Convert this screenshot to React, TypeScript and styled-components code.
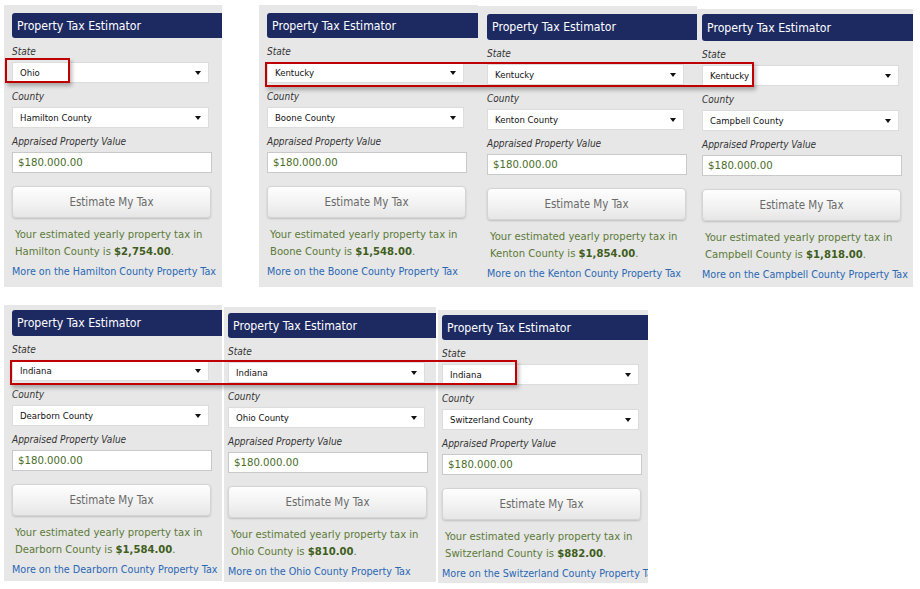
import React from "react"
import styled, { createGlobalStyle } from "styled-components"

const FONT = `"DejaVu Sans Condensed", "DejaVu Sans", Verdana, sans-serif`

interface Estimate {
    x: number
    y: number
    w: number
    h: number
    padTop: number
    padLeft: number
    headerH: number
    state: string
    county: string
    tax: string
}

const estimates: Estimate[] = [
    { x: 4, y: 5, w: 218, h: 282, padTop: 8, padLeft: 8, headerH: 25, state: "Ohio", county: "Hamilton County", tax: "$2,754.00" },
    { x: 259, y: 5, w: 219, h: 282, padTop: 8, padLeft: 8, headerH: 25, state: "Kentucky", county: "Boone County", tax: "$1,548.00" },
    { x: 478, y: 6, w: 219, h: 281, padTop: 8, padLeft: 9, headerH: 26, state: "Kentucky", county: "Kenton County", tax: "$1,854.00" },
    { x: 697, y: 9, w: 216, h: 278, padTop: 5, padLeft: 5, headerH: 27, state: "Kentucky", county: "Campbell County", tax: "$1,818.00" },
    { x: 4, y: 305, w: 218, h: 276, padTop: 5, padLeft: 8, headerH: 26, state: "Indiana", county: "Dearborn County", tax: "$1,584.00" },
    { x: 224, y: 307, w: 212, h: 275, padTop: 6, padLeft: 4, headerH: 25, state: "Indiana", county: "Ohio County", tax: "$810.00" },
    { x: 438, y: 310, w: 210, h: 273, padTop: 5, padLeft: 4, headerH: 25, state: "Indiana", county: "Switzerland County", tax: "$882.00" },
]

// red call-out frames drawn over the collage
const highlights = [
    { x: 5, y: 58, w: 65, h: 25 },
    { x: 265, y: 62, w: 489, h: 25 },
    { x: 10, y: 360, w: 507, h: 25 },
]

const GlobalStyle = createGlobalStyle`
    html, body {
        margin: 0;
        padding: 0;
        background: #fff;
        font-family: ${FONT};
        font-stretch: condensed;
    }
`

const Canvas = styled.div`
    position: relative;
    width: 920px;
    height: 589px;
    overflow: hidden;
    background: #fff;
`

const Panel = styled.section<{ $x: number; $y: number; $w: number; $h: number; $pt: number; $pl: number }>`
    position: absolute;
    left: ${({ $x }) => $x}px;
    top: ${({ $y }) => $y}px;
    width: ${({ $w }) => $w}px;
    height: ${({ $h }) => $h}px;
    padding: ${({ $pt }) => $pt}px 0 0 ${({ $pl }) => $pl}px;
    box-sizing: border-box;
    background: #e7e7e7;
    overflow: hidden;
    display: flex;
    flex-direction: column;
`

const Header = styled.h2<{ $h: number }>`
    margin: 0 0 7px;
    height: ${({ $h }) => $h}px;
    padding-left: 5px;
    display: flex;
    align-items: center;
    background: #1d2a62;
    border-radius: 3px 0 0 3px;
    color: #fff;
    font-size: 12.2px;
    font-weight: normal;
    white-space: nowrap;
`

const Label = styled.label`
    display: block;
    height: 14px;
    line-height: 14px;
    margin-bottom: 3px;
    font-size: 10px;
    font-style: italic;
    color: #333;
`

const SelectBox = styled.div`
    width: 197px;
    height: 21px;
    margin-bottom: 7px;
    padding: 0 7px 0 7px;
    box-sizing: border-box;
    display: flex;
    align-items: center;
    justify-content: space-between;
    background: #fff;
    border: 1px solid #dcdcdc;
    font-size: 9.5px;
    color: #111;
`

const Arrow = styled.span`
    width: 0;
    height: 0;
    border-left: 3px solid transparent;
    border-right: 3px solid transparent;
    border-top: 4px solid #111;
`

const ValueInput = styled.input`
    width: 200px;
    height: 21px;
    margin: 0 0 13px;
    padding: 0 5px;
    box-sizing: border-box;
    background: #fff;
    border: 1px solid #c9c9c9;
    font-family: ${FONT};
    font-stretch: condensed;
    font-size: 11.3px;
    color: #4a6d28;
    outline: none;
`

const EstimateButton = styled.button`
    width: 199px;
    height: 32px;
    margin-bottom: 8px;
    padding: 0;
    border: 1px solid #d4d4d4;
    border-radius: 4px;
    background: linear-gradient(#fefefe, #f1f1f1 60%, #e6e6e6);
    box-shadow: 0 1px 2px rgba(0, 0, 0, 0.18);
    font-family: ${FONT};
    font-stretch: condensed;
    font-size: 11.5px;
    color: #6a6a6a;
`

const Result = styled.p`
    margin: 0 0 5px;
    padding-left: 3px;
    font-size: 11.2px;
    line-height: 17px;
    color: #5c7a38;

    strong {
        color: #3f5e1d;
    }
`

const MoreLink = styled.a`
    display: block;
    font-size: 10.7px;
    line-height: 14px;
    color: #2a68b5;
    text-decoration: none;
    white-space: nowrap;
`

const Callout = styled.div<{ $x: number; $y: number; $w: number; $h: number }>`
    position: absolute;
    left: ${({ $x }) => $x}px;
    top: ${({ $y }) => $y}px;
    width: ${({ $w }) => $w}px;
    height: ${({ $h }) => $h}px;
    box-sizing: border-box;
    border: 2px solid #c00000;
    box-shadow: 2px 3px 4px rgba(0, 0, 0, 0.28);
    pointer-events: none;
`

const Estimator: React.FC<{ e: Estimate }> = ({ e }) => (
    <Panel $x={e.x} $y={e.y} $w={e.w} $h={e.h} $pt={e.padTop} $pl={e.padLeft}>
        <Header $h={e.headerH}>Property Tax Estimator</Header>
        <Label>State</Label>
        <SelectBox>
            <span>{e.state}</span>
            <Arrow />
        </SelectBox>
        <Label>County</Label>
        <SelectBox>
            <span>{e.county}</span>
            <Arrow />
        </SelectBox>
        <Label>Appraised Property Value</Label>
        <ValueInput readOnly value="$180.000.00" />
        <EstimateButton>Estimate My Tax</EstimateButton>
        <Result>
            Your estimated yearly property tax in
            <br />
            {e.county} is <strong>{e.tax}</strong>.
        </Result>
        <MoreLink href="#">More on the {e.county} Property Tax</MoreLink>
    </Panel>
)

export default function App() {
    return (
        <>
            <GlobalStyle />
            <Canvas>
                {estimates.map((e) => (
                    <Estimator key={e.county} e={e} />
                ))}
                {highlights.map((h, i) => (
                    <Callout key={i} $x={h.x} $y={h.y} $w={h.w} $h={h.h} />
                ))}
            </Canvas>
        </>
    )
}
